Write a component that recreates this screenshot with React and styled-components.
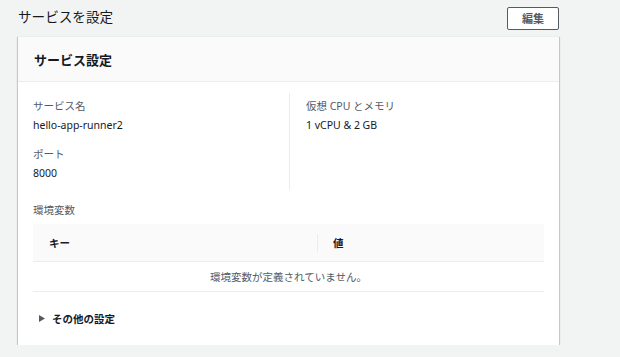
import React from "react";
import styled, { createGlobalStyle } from "styled-components";

const Global = createGlobalStyle`
  html, body { margin: 0; padding: 0; background: #f2f3f3; }
  body { font-family: "Noto Sans", "Noto Sans CJK JP", sans-serif; color: #16191f; }
  * { box-sizing: border-box; }
`;

const Page = styled.div`
  padding: 6px 61px 0 18px;
`;

const TopBar = styled.div`
  display: flex;
  justify-content: space-between;
  align-items: center;
  height: 24px;
`;

const Title = styled.h2`
  margin: -3px 0 0;
  font-size: 13.6px;
  font-weight: 400;
  color: #16191f;
  line-height: 20px;
`;

const Button = styled.button`
  width: 52px;
  height: 23px;
  border: 1px solid #545b64;
  border-radius: 2px;
  background: #fff;
  color: #545b64;
  font-family: inherit;
  font-size: 11px;
  font-weight: 700;
  padding: 0;
  cursor: pointer;
`;

const Card = styled.section`
  margin-top: 6px;
  background: #fff;
  border-top: 1px solid #eaeded;
  box-shadow: 0 1px 1px 0 rgba(0, 28, 36, 0.3), 1px 1px 1px 0 rgba(0, 28, 36, 0.15),
    -1px 1px 1px 0 rgba(0, 28, 36, 0.15);
`;

const CardHeader = styled.div`
  height: 45px;
  display: flex;
  align-items: center;
  padding-left: 16px;
  background: #fafafa;
  border-bottom: 1px solid #eaeded;
  font-size: 13px;
  font-weight: 700;
`;

const CardBody = styled.div`
  padding: 11px 15px 0 15px;
`;

const Columns = styled.div`
  display: grid;
  grid-template-columns: 256px 1fr;
`;

const Column = styled.div`
  display: flex;
  flex-direction: column;
  gap: 12px;
  padding: 5px 0 8px ${(p) => (p.$divided ? "16px" : "0")};
  border-left: ${(p) => (p.$divided ? "1px solid #eaeded" : "none")};
  min-height: 97px;
`;

const Field = styled.div`
  display: flex;
  flex-direction: column;
  gap: 2px;
`;

const Label = styled.div`
  font-size: 10.5px;
  line-height: 17px;
  color: #545b64;
`;

const Value = styled.div`
  font-size: 10.5px;
  line-height: 17px;
  color: #16191f;
`;

const SectionLabel = styled(Label)`
  margin-top: 12px;
`;

const Table = styled.div`
  margin-top: 5px;
`;

const HeadRow = styled.div`
  display: grid;
  grid-template-columns: 284px 1fr;
  height: 38px;
  align-items: center;
  background: #fafafa;
  border-bottom: 1px solid #eaeded;
`;

const HeadCell = styled.div`
  font-size: 10.5px;
  font-weight: 700;
  padding-left: ${(p) => (p.$divided ? "15px" : "16px")};
  border-left: ${(p) => (p.$divided ? "1px solid #eaeded" : "none")};
  line-height: 18px;
`;

const EmptyRow = styled.div`
  height: 30px;
  display: flex;
  align-items: center;
  justify-content: center;
  font-size: 10.5px;
  color: #545b64;
  border-bottom: 1px solid #eaeded;
`;

const Expander = styled.div`
  display: flex;
  align-items: center;
  gap: 7px;
  height: 53px;
  padding-left: 6px;
  font-size: 10.5px;
  font-weight: 700;
  color: #16191f;
`;

const Caret = styled.svg`
  width: 6px;
  height: 7px;
`;

export default function App() {
  return (
    <>
      <Global />
      <Page>
        <TopBar>
          <Title>サービスを設定</Title>
          <Button>編集</Button>
        </TopBar>
        <Card>
          <CardHeader>サービス設定</CardHeader>
          <CardBody>
            <Columns>
              <Column>
                <Field>
                  <Label>サービス名</Label>
                  <Value>hello-app-runner2</Value>
                </Field>
                <Field>
                  <Label>ポート</Label>
                  <Value>8000</Value>
                </Field>
              </Column>
              <Column $divided>
                <Field>
                  <Label>仮想 CPU とメモリ</Label>
                  <Value>1 vCPU &amp; 2 GB</Value>
                </Field>
              </Column>
            </Columns>
            <SectionLabel>環境変数</SectionLabel>
            <Table>
              <HeadRow>
                <HeadCell>キー</HeadCell>
                <HeadCell $divided>値</HeadCell>
              </HeadRow>
              <EmptyRow>環境変数が定義されていません。</EmptyRow>
            </Table>
            <Expander>
              <Caret viewBox="0 0 6 7">
                <path d="M0 0 L6 3.5 L0 7 Z" fill="#545b64" />
              </Caret>
              その他の設定
            </Expander>
          </CardBody>
        </Card>
      </Page>
    </>
  );
}
